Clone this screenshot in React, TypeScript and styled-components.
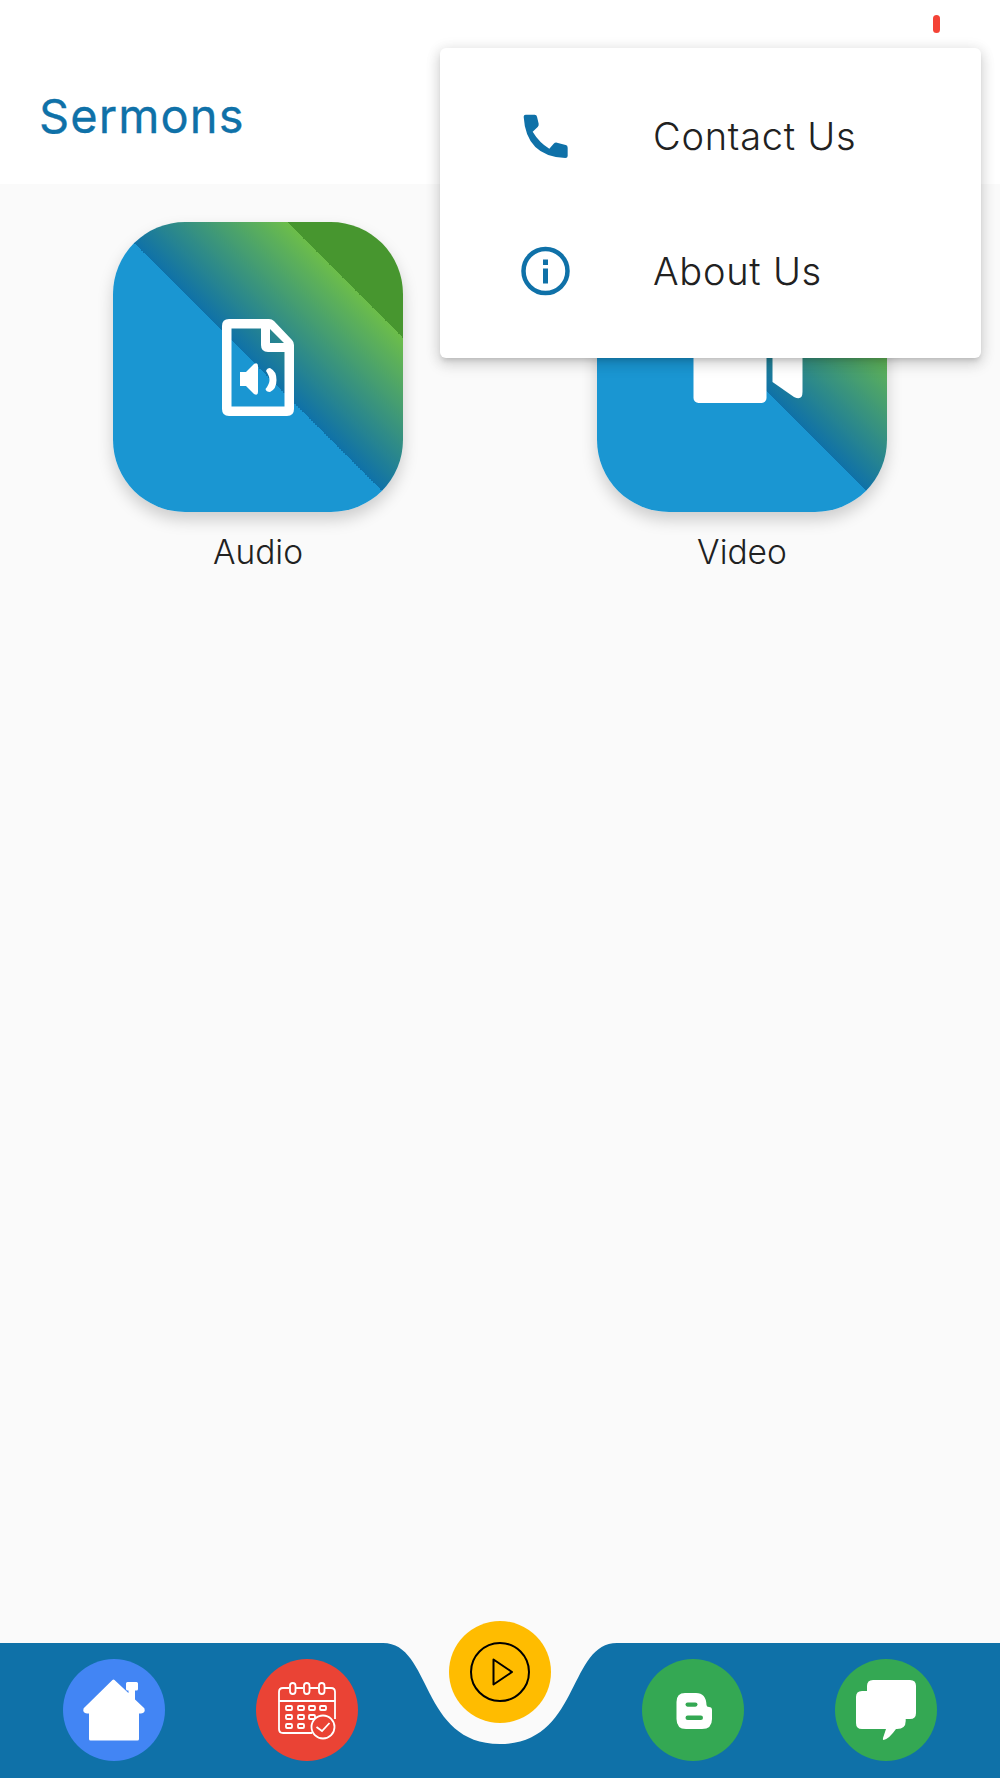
import React from "react";
import styled, { createGlobalStyle } from "styled-components";

const Global = createGlobalStyle`
  html, body { margin: 0; padding: 0; background: #fafafa; }
  body { font-family: Inter, "Noto Sans", sans-serif; }
`;

const Page = styled.div`
  position: relative;
  width: 1000px;
  height: 1778px;
  display: flex;
  flex-direction: column;
  overflow: hidden;
  background: #fafafa;
`;

const Header = styled.header`
  height: 184px;
  flex: none;
  background: #fff;
  display: flex;
  justify-content: space-between;
  padding: 0 60px 0 39px;
  box-sizing: border-box;
`;

const Title = styled.h1`
  margin: 0;
  padding-top: 90px;
  font-size: 47px;
  line-height: 52px;
  font-weight: 400;
  letter-spacing: 1.1px;
  color: #0f71a8;
  -webkit-text-stroke: 0.3px #0f71a8;
`;

const StatusMark = styled.span`
  display: block;
  width: 7px;
  height: 18px;
  margin-top: 15px;
  border-radius: 3.5px;
  background: #f44336;
`;

const Content = styled.main`
  flex: 1;
  display: grid;
  grid-template-columns: 1fr 1fr;
  align-content: start;
  padding: 38px 16px 0;
`;

const Tile = styled.div`
  display: flex;
  flex-direction: column;
  align-items: center;
`;

const TileFace = styled.div`
  width: 290px;
  height: 290px;
  border-radius: 72px;
  display: flex;
  align-items: center;
  justify-content: center;
  background: linear-gradient(45deg, #1a96d2 50%, #0f71a8 50%, #6cbd4a 80%, #47962f 80%);
  box-shadow: 0 8px 16px rgba(0, 0, 0, 0.18);
`;

const TileLabel = styled.span`
  margin-top: 21px;
  font-size: 33.5px;
  line-height: 38px;
  font-weight: 350;
  color: #212121;
`;

const Menu = styled.div`
  position: absolute;
  left: 440px;
  top: 48px;
  width: 541px;
  box-sizing: border-box;
  padding: 20px 0;
  background: #fff;
  border-radius: 6px;
  box-shadow: 0 4px 5px -2px rgba(0, 0, 0, 0.14), 0 6px 14px 2px rgba(0, 0, 0, 0.1), 0 2px 14px 2px rgba(0, 0, 0, 0.08);
`;

const MenuItem = styled.div`
  height: 135px;
  display: flex;
  align-items: center;
  gap: 73px;
  padding-left: 70px;
`;

const MenuText = styled.span`
  font-size: 38px;
  line-height: 44px;
  font-weight: 350;
  letter-spacing: 0.75px;
  color: #212121;
`;

const Bar = styled.nav`
  position: relative;
  height: 135px;
  flex: none;
  display: flex;
  justify-content: center;
  align-items: flex-start;
  gap: 91px;
  padding-top: 16px;
  box-sizing: border-box;
`;

const BarShape = styled.svg`
  position: absolute;
  left: 0;
  top: 0;
`;

const NavButton = styled.div<{ $color: string; $raised?: boolean }>`
  position: relative;
  width: 102px;
  height: 102px;
  flex: none;
  border-radius: 50%;
  background: ${(p) => p.$color};
  margin-top: ${(p) => (p.$raised ? "-38px" : "0")};
  svg { display: block; }
`;

const PhoneIcon = () => (
  <svg width="70" height="70" viewBox="0 0 210 210" fill="#0f71a8">
    <path d="M47 41 L74 41 Q80 41 81 47 L86 68 Q87 74 83 78 L68 92 Q88 125 118 143 L131 128 Q135 124 141 125 L167 132 Q173 133 173 140 L173 165 Q173 171 166 171 Q48 166 41 47 Q41 41 47 41 Z" />
  </svg>
);

const InfoIcon = () => (
  <svg width="70" height="70" viewBox="0 0 70 70" fill="none">
    <circle cx="35.5" cy="35" r="22" stroke="#0f71a8" strokeWidth="4.5" />
    <rect x="33" y="23.5" width="5" height="5.5" fill="#0f71a8" />
    <rect x="33" y="32.5" width="5" height="15" fill="#0f71a8" />
  </svg>
);

const AudioFileIcon = () => (
  <svg width="72" height="97" viewBox="0 0 72 97" fill="#fff">
    <path
      fillRule="evenodd"
      d="M7 0 H47 Q50 0 52 2 L70 21 Q72 23 72 26 V90 Q72 97 65 97 H7 Q0 97 0 90 V7 Q0 0 7 0 Z M9.5 9.5 V87.5 H62.5 V33 H46 Q39 33 39 26 V9.5 Z M48 10 V24 H62 Z"
    />
    <path d="M18 53 H24 L32 45 Q36 43 36 47 V73 Q36 77 32 75 L24 67 H18 Z" />
    <path d="M44 52 Q45 49 48 49 Q54.5 52 54.5 61 Q54.5 70 48 73 Q44 73 43.5 70 Q47.5 65 47.5 61 Q47.5 57 44 52 Z" />
  </svg>
);

const VideoIcon = () => (
  <svg width="124" height="124" viewBox="0 0 124 124" fill="#fff">
    <rect x="13.5" y="26" width="73" height="72" rx="5" />
    <path d="M92.5 40 L115 30 Q122.5 28 122.5 34 V87 Q122.5 96 114 92 L92.5 77 Z" />
  </svg>
);

const HomeIcon = () => (
  <svg width="102" height="102" viewBox="0 0 102 102" fill="#fff">
    <path
      stroke="#fff"
      strokeWidth="3"
      strokeLinejoin="round"
      d="M50.5 22 L22 50 Q21 53 24 53 L27.5 53 V80 H74.5 V53 L78 53 Q81 53 80 50 L70.5 41 V30 H73.5 V24.5 H64.5 V30 H67 V37.5 Z"
    />
  </svg>
);

const CalendarIcon = () => (
  <svg width="102" height="102" viewBox="0 0 102 102" fill="none" stroke="#fff" strokeWidth="1.8">
    <path d="M33 29 H27 Q23 29 23 33 V70 Q23 74 27 74 H56 M23 42 H79 V33 Q79 29 75 29 H69 M40 29 H47 M54 29 H62 M79 42 V60" />
    <rect x="34" y="24" width="5.5" height="11" rx="2.7" />
    <rect x="48" y="24" width="5.5" height="11" rx="2.7" />
    <rect x="63" y="24" width="5.5" height="11" rx="2.7" />
    {[33, 45, 56, 67].map((x) => (
      <rect key={`a${x}`} x={x - 3} y="47" width="6" height="4" rx="1" />
    ))}
    {[33, 45, 56].map((x) => (
      <rect key={`b${x}`} x={x - 3} y="56" width="6" height="4" rx="1" />
    ))}
    {[33, 45].map((x) => (
      <rect key={`c${x}`} x={x - 3} y="65" width="6" height="4" rx="1" />
    ))}
    <circle cx="67" cy="68" r="11.5" fill="#ea4335" />
    <path d="M60.5 68 L66 72 L73.5 64" />
  </svg>
);

const PlayIcon = () => (
  <svg width="102" height="102" viewBox="0 0 102 102" fill="none" stroke="#000" strokeWidth="2">
    <circle cx="51" cy="51" r="29" />
    <path d="M44.5 38.5 L63 51 L44.5 63.5 Z" strokeLinejoin="round" />
  </svg>
);

const BloggerIcon = () => (
  <svg width="102" height="102" viewBox="0 0 102 102">
    <path
      fill="#fff"
      d="M43 34 H54 Q64 34 64.5 46 Q64.5 48 67 48 Q70 48 70 51 V60 Q70 70 60 70 H44 Q34.5 70 34.5 60 V43 Q34.5 34 43 34 Z"
    />
    <rect x="43.5" y="43.5" width="12" height="4.2" rx="2.1" fill="#34a853" />
    <rect x="43.5" y="56.5" width="17.5" height="4.4" rx="2.2" fill="#34a853" />
  </svg>
);

const ChatIcon = () => (
  <svg width="102" height="102" viewBox="0 0 102 102" fill="#fff">
    <path d="M38 21 H75 Q81 21 81 27 V54 Q81 60 75 60 H32 V27 Q32 21 38 21 Z" />
    <path d="M27 32 H64 Q70.7 32 70.7 38 V62 Q70.7 70 62 70 H61 Q54 80 48.5 81 Q47.5 81 48 79 L51 70 H27 Q21 70 21 64 V38 Q21 32 27 32 Z" />
  </svg>
);

export default function App() {
  return (
    <Page>
      <Global />
      <Header>
        <Title>Sermons</Title>
        <StatusMark />
      </Header>
      <Content>
        <Tile>
          <TileFace>
            <AudioFileIcon />
          </TileFace>
          <TileLabel>Audio</TileLabel>
        </Tile>
        <Tile>
          <TileFace>
            <VideoIcon />
          </TileFace>
          <TileLabel>Video</TileLabel>
        </Tile>
      </Content>
      <Bar>
        <BarShape width="1000" height="135" viewBox="0 0 1000 135">
          <path
            fill="#0f71a8"
            d="M0 0 H383 C432 0 420 101 500 101 C580 101 568 0 617 0 H1000 V135 H0 Z"
          />
        </BarShape>
        <NavButton $color="#4285f4">
          <HomeIcon />
        </NavButton>
        <NavButton $color="#ea4335">
          <CalendarIcon />
        </NavButton>
        <NavButton $color="#ffbc00" $raised>
          <PlayIcon />
        </NavButton>
        <NavButton $color="#34a853">
          <BloggerIcon />
        </NavButton>
        <NavButton $color="#34a853">
          <ChatIcon />
        </NavButton>
      </Bar>
      <Menu>
        <MenuItem>
          <PhoneIcon />
          <MenuText>Contact Us</MenuText>
        </MenuItem>
        <MenuItem>
          <InfoIcon />
          <MenuText>About Us</MenuText>
        </MenuItem>
      </Menu>
    </Page>
  );
}
